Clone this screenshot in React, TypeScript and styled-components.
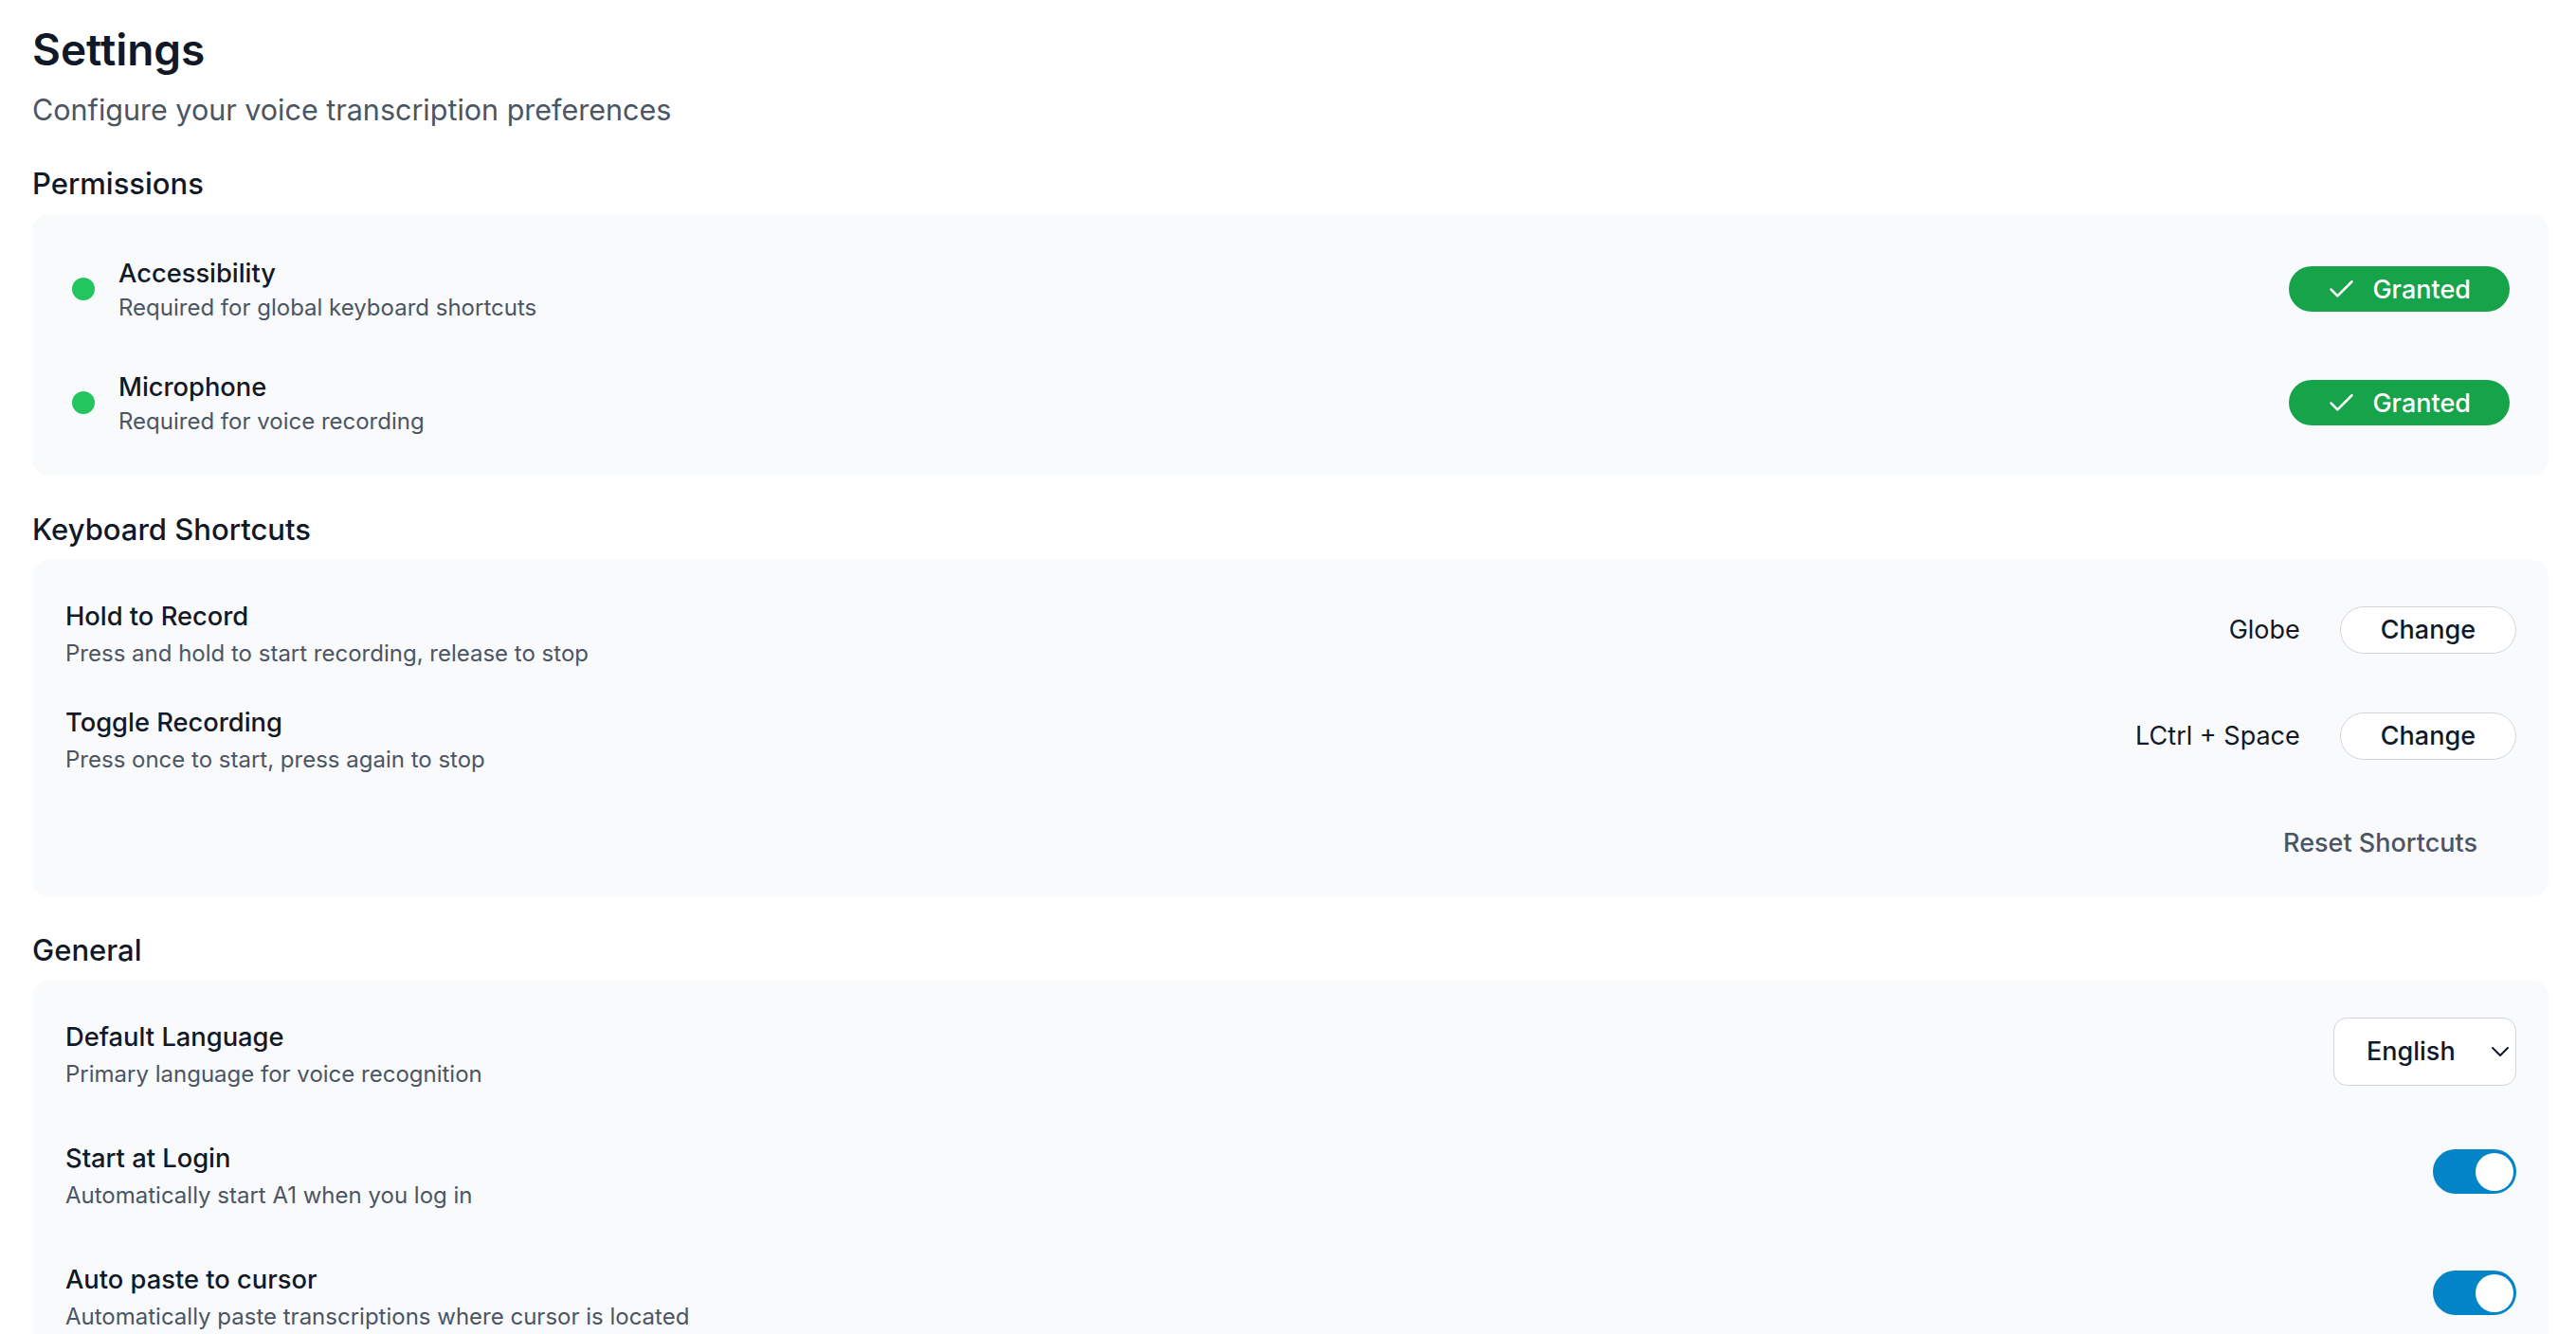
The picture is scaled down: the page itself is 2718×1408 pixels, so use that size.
import React from "react";
import styled, { createGlobalStyle } from "styled-components";

const GlobalStyle = createGlobalStyle`
  html, body {
    margin: 0;
    padding: 0;
    background: #ffffff;
    font-family: Inter, "Noto Sans", "Liberation Sans", sans-serif;
    color: #111827;
    -webkit-font-smoothing: antialiased;
  }
  * { box-sizing: border-box; }
`;

const Page = styled.main`
  padding: 26px 29px 0 34px;
`;

const Title = styled.h1`
  margin: 0;
  font-size: 46px;
  line-height: 52px;
  font-weight: 600;
  color: #111827;
`;

const Subtitle = styled.p`
  margin: 16px 0 0;
  font-size: 30.5px;
  line-height: 44px;
  font-weight: 400;
  color: #4b5563;
`;

const Sections = styled.div`
  margin-top: 34px;
  display: flex;
  flex-direction: column;
  gap: 35px;
`;

const Section = styled.section`
  display: flex;
  flex-direction: column;
`;

const SectionTitle = styled.h2`
  margin: 0 0 10px;
  font-size: 31px;
  line-height: 44px;
  font-weight: 500;
  color: #111827;
`;

const Card = styled.div<{ $pad: string; $gap: number }>`
  background: #f9fafb;
  border-radius: 17px;
  padding: ${(p) => p.$pad};
  display: flex;
  flex-direction: column;
  gap: ${(p) => p.$gap}px;
`;

const Row = styled.div`
  display: flex;
  align-items: center;
  justify-content: space-between;
`;

const RowMain = styled.div`
  display: flex;
  align-items: center;
  gap: 25px;
`;

const Dot = styled.span`
  width: 24px;
  height: 24px;
  border-radius: 50%;
  background: #22c55e;
  flex: none;
`;

const TextBlock = styled.div`
  display: flex;
  flex-direction: column;
`;

const Label = styled.div`
  font-size: 27.3px;
  line-height: 40px;
  font-weight: 500;
  color: #111827;
`;

const Desc = styled.div<{ $gap: number }>`
  margin-top: ${(p) => p.$gap}px;
  font-size: 24px;
  line-height: 32px;
  font-weight: 400;
  color: #4b5563;
`;

const Badge = styled.span`
  display: inline-flex;
  align-items: center;
  gap: 16px;
  height: 48px;
  padding: 0 41px 0 39px;
  border-radius: 24px;
  background: #16a34a;
  color: #ffffff;
  font-size: 27px;
  font-weight: 500;
`;

const Controls = styled.div`
  display: flex;
  align-items: center;
  gap: 42px;
  margin-top: -8px;
`;

const KeyValue = styled.span`
  font-size: 27px;
  line-height: 40px;
  color: #111827;
`;

const PillButton = styled.button`
  height: 50px;
  padding: 0 42px;
  border: 1.5px solid #d1d5db;
  border-radius: 25px;
  background: #ffffff;
  color: #111827;
  font-family: inherit;
  font-size: 27px;
  font-weight: 500;
  cursor: pointer;
`;

const FooterRow = styled.div`
  display: flex;
  justify-content: flex-end;
  padding-top: 9px;
`;

const GhostButton = styled.button`
  height: 50px;
  padding: 0 41px;
  border: none;
  border-radius: 25px;
  background: transparent;
  color: #4b5563;
  font-family: inherit;
  font-size: 27px;
  font-weight: 500;
  cursor: pointer;
`;

const SelectBox = styled.button`
  display: flex;
  align-items: center;
  justify-content: space-between;
  width: 193px;
  height: 72px;
  margin-top: -6px;
  padding: 0 6px 0 34px;
  border: 1.5px solid #d1d5db;
  border-radius: 14px;
  background: #ffffff;
  color: #111827;
  font-family: inherit;
  font-size: 27px;
  font-weight: 500;
  cursor: pointer;
`;

const Toggle = styled.span<{ $on: boolean }>`
  display: inline-flex;
  align-items: center;
  justify-content: ${(p) => (p.$on ? "flex-end" : "flex-start")};
  width: 88px;
  height: 47px;
  padding: 3.5px;
  border-radius: 24px;
  background: ${(p) => (p.$on ? "#0284c7" : "#d1d5db")};
  margin-top: -8px;
`;

const Knob = styled.span`
  width: 40px;
  height: 40px;
  border-radius: 50%;
  background: #ffffff;
`;

const CheckIcon = () => (
  <svg width="33" height="33" viewBox="0 0 24 24" fill="none" stroke="#ffffff" strokeWidth="1.8" strokeLinecap="round" strokeLinejoin="round">
    <polyline points="20 6 9 17 4 12" />
  </svg>
);

const Chevron = () => (
  <svg width="20" height="12" viewBox="0 0 20 12" fill="none" stroke="#111827" strokeWidth="2" strokeLinecap="round" strokeLinejoin="round">
    <polyline points="2 2 10 10 18 2" />
  </svg>
);

const permissions = [
  { name: "Accessibility", desc: "Required for global keyboard shortcuts" },
  { name: "Microphone", desc: "Required for voice recording" },
];

const shortcuts = [
  { name: "Hold to Record", desc: "Press and hold to start recording, release to stop", key: "Globe" },
  { name: "Toggle Recording", desc: "Press once to start, press again to stop", key: "LCtrl + Space" },
];

export default function App() {
  return (
    <>
      <GlobalStyle />
      <Page>
        <Title>Settings</Title>
        <Subtitle>Configure your voice transcription preferences</Subtitle>
        <Sections>
          <Section>
            <SectionTitle>Permissions</SectionTitle>
            <Card $pad="43px 41px 41px 42px" $gap={48}>
              {permissions.map((p) => (
                <Row key={p.name}>
                  <RowMain>
                    <Dot />
                    <TextBlock>
                      <Label>{p.name}</Label>
                      <Desc $gap={0}>{p.desc}</Desc>
                    </TextBlock>
                  </RowMain>
                  <Badge>
                    <CheckIcon />
                    Granted
                  </Badge>
                </Row>
              ))}
            </Card>
          </Section>

          <Section>
            <SectionTitle>Keyboard Shortcuts</SectionTitle>
            <Card $pad="40px 34px 32px 35px" $gap={37}>
              {shortcuts.map((s) => (
                <Row key={s.name}>
                  <TextBlock>
                    <Label>{s.name}</Label>
                    <Desc $gap={3}>{s.desc}</Desc>
                  </TextBlock>
                  <Controls>
                    <KeyValue>{s.key}</KeyValue>
                    <PillButton>Change</PillButton>
                  </Controls>
                </Row>
              ))}
              <FooterRow>
                <GhostButton>Reset Shortcuts</GhostButton>
              </FooterRow>
            </Card>
          </Section>

          <Section>
            <SectionTitle>General</SectionTitle>
            <Card $pad="40px 34px 40px 35px" $gap={53}>
              <Row>
                <TextBlock>
                  <Label>Default Language</Label>
                  <Desc $gap={3}>Primary language for voice recognition</Desc>
                </TextBlock>
                <SelectBox>
                  English
                  <Chevron />
                </SelectBox>
              </Row>
              <Row>
                <TextBlock>
                  <Label>Start at Login</Label>
                  <Desc $gap={3}>Automatically start A1 when you log in</Desc>
                </TextBlock>
                <Toggle $on>
                  <Knob />
                </Toggle>
              </Row>
              <Row>
                <TextBlock>
                  <Label>Auto paste to cursor</Label>
                  <Desc $gap={3}>Automatically paste transcriptions where cursor is located</Desc>
                </TextBlock>
                <Toggle $on>
                  <Knob />
                </Toggle>
              </Row>
            </Card>
          </Section>
        </Sections>
      </Page>
    </>
  );
}
